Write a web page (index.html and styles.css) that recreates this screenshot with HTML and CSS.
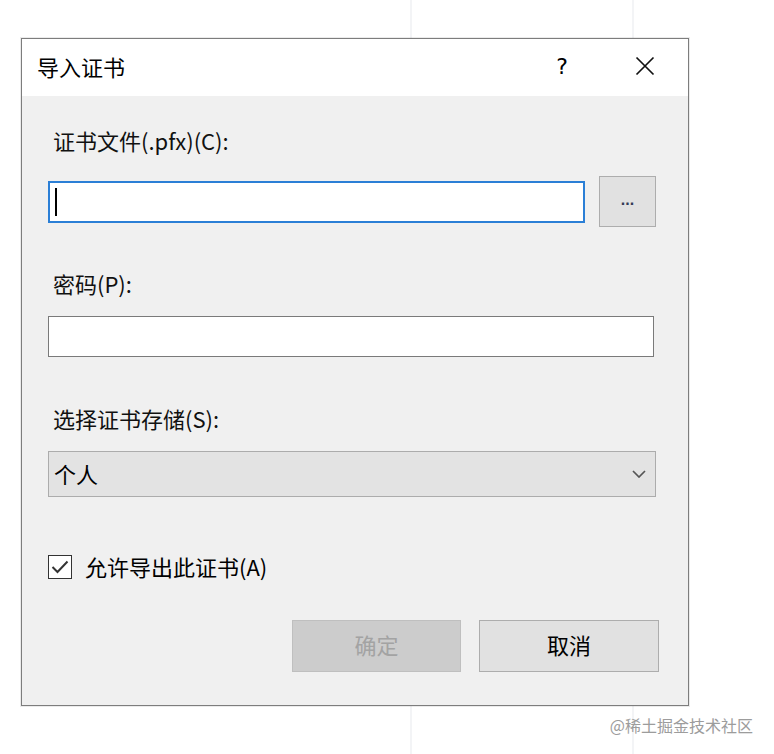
FILE: index.html
```html
<!DOCTYPE html>
<html lang="zh-CN">
<head>
<meta charset="utf-8">
<title>导入证书</title>
<link rel="stylesheet" href="styles.css">
</head>
<body>
<div class="page">
  <div class="dialog">
    <div class="titlebar">
      <span class="title">导入证书</span>
      <span class="help">?</span>
      <span class="close">
        <svg width="20" height="20" viewBox="0 0 20 20"><path d="M1.5 1.5 L18.5 18.5 M18.5 1.5 L1.5 18.5" stroke="#111" stroke-width="1.7" fill="none"/></svg>
      </span>
    </div>
    <div class="content">
      <div class="label label-first">证书文件(.pfx)(C):</div>
      <div class="file-row">
        <div class="field field-focus"><span class="caret"></span></div>
        <div class="browse">...</div>
      </div>
      <div class="label label-gap">密码(P):</div>
      <div class="field field-pw"></div>
      <div class="label label-gap2">选择证书存储(S):</div>
      <div class="select">
        <span class="select-text">个人</span>
        <svg width="14" height="8" viewBox="0 0 14 8"><path d="M1 1 L7 7 L13 1" stroke="#555" stroke-width="1.7" fill="none"/></svg>
      </div>
      <div class="check-row">
        <span class="checkbox">
          <svg width="20" height="20" viewBox="0 0 20 20"><path d="M2.5 10 L7.5 15 L17.5 4.5" stroke="#333" stroke-width="2" fill="none"/></svg>
        </span>
        <span class="check-text">允许导出此证书(A)</span>
      </div>
      <div class="buttons">
        <div class="btn btn-disabled">确定</div>
        <div class="btn btn-cancel">取消</div>
      </div>
    </div>
  </div>
  <div class="watermark">@稀土掘金技术社区</div>
</div>
</body>
</html>
```
FILE: styles.css
```css
* { box-sizing: border-box; }
html, body {
  margin: 0;
  padding: 0;
}
body {
  width: 774px;
  height: 754px;
  overflow: hidden;
  background-color: #ffffff;
  background-image: linear-gradient(to right,
    transparent 410px, #f3f4f6 410px, #f3f4f6 412px, transparent 412px,
    transparent 632px, #f3f4f6 632px, #f3f4f6 634px, transparent 634px);
  font-family: "Noto Sans CJK SC", "Noto Sans", sans-serif;
  color: #000;
}
.page {
  padding-top: 38px;
}
.dialog {
  margin-left: 21px;
  width: 668px;
  height: 668px;
  border: 1px solid #7d7d7d;
  box-shadow: 0 0 0 1px rgba(0,0,0,0.08);
  background: #f0f0f0;
  display: flex;
  flex-direction: column;
}
.titlebar {
  height: 57px;
  background: #ffffff;
  display: flex;
  align-items: center;
  padding-left: 15px;
  padding-bottom: 3px;
}
.title {
  font-size: 22px;
  line-height: 28px;
  flex: 1;
}
.help {
  font-family: "DejaVu Sans", sans-serif;
  font-size: 22px;
  width: 24px;
  text-align: center;
  margin-right: 61px;
}
.close {
  width: 20px;
  height: 20px;
  display: flex;
  margin-right: 33px;
}
.content {
  flex: 1;
  display: flex;
  flex-direction: column;
  padding-left: 26px;
}
.label {
  font-size: 22px;
  line-height: 28px;
  padding-left: 5px;
  color: #111;
}
.label-first { margin-top: 30px; }
.label-gap { margin-top: 42px; }
.label-gap2 { margin-top: 47px; }
.file-row {
  margin-top: 22px;
  display: flex;
  align-items: center;
  height: 51px;
}
.field {
  background: #fff;
  border: 1px solid #7a7a7a;
  display: flex;
  align-items: center;
}
.field-focus {
  width: 537px;
  height: 42px;
  border: 2px solid #2b7fd6;
  padding-left: 5px;
}
.caret {
  width: 2px;
  height: 28px;
  background: #000;
}
.browse {
  margin-left: 14px;
  width: 57px;
  height: 51px;
  background: #e1e1e1;
  border: 1px solid #adadad;
  display: flex;
  align-items: center;
  justify-content: center;
  font-family: "Liberation Sans", sans-serif;
  font-size: 16px;
  font-weight: bold;
  color: #333a55;
  padding-bottom: 4px;
}
.field-pw {
  margin-top: 19px;
  width: 606px;
  height: 41px;
}
.select {
  margin-top: 19px;
  width: 608px;
  height: 46px;
  background: #e3e3e3;
  border: 1px solid #acacac;
  display: flex;
  align-items: center;
  justify-content: space-between;
  padding-left: 5px;
  padding-right: 9px;
  font-size: 22px;
}
.select-text {
  line-height: 28px;
  padding-bottom: 3px;
}
.check-row {
  margin-top: 56px;
  display: flex;
  align-items: center;
  height: 28px;
}
.checkbox {
  width: 24px;
  height: 24px;
  border: 1px solid #333;
  background: #fff;
  display: flex;
  align-items: center;
  justify-content: center;
}
.check-text {
  margin-left: 13px;
  font-size: 22px;
  line-height: 28px;
  padding-bottom: 3px;
}
.buttons {
  margin-top: 39px;
  display: flex;
  justify-content: flex-end;
  gap: 18px;
  padding-right: 29px;
}
.btn {
  height: 52px;
  display: flex;
  align-items: center;
  justify-content: center;
  font-size: 22px;
  padding-bottom: 4px;
}
.btn-disabled {
  width: 169px;
  background: #cccccc;
  border: 1px solid #bfbfbf;
  color: #a3a3a3;
}
.btn-cancel {
  width: 180px;
  background: #e1e1e1;
  border: 1px solid #adadad;
  color: #000;
}
.watermark {
  margin-top: 7px;
  text-align: right;
  padding-right: 21px;
  font-size: 16px;
  line-height: 24px;
  color: #9c9c9c;
}
```
